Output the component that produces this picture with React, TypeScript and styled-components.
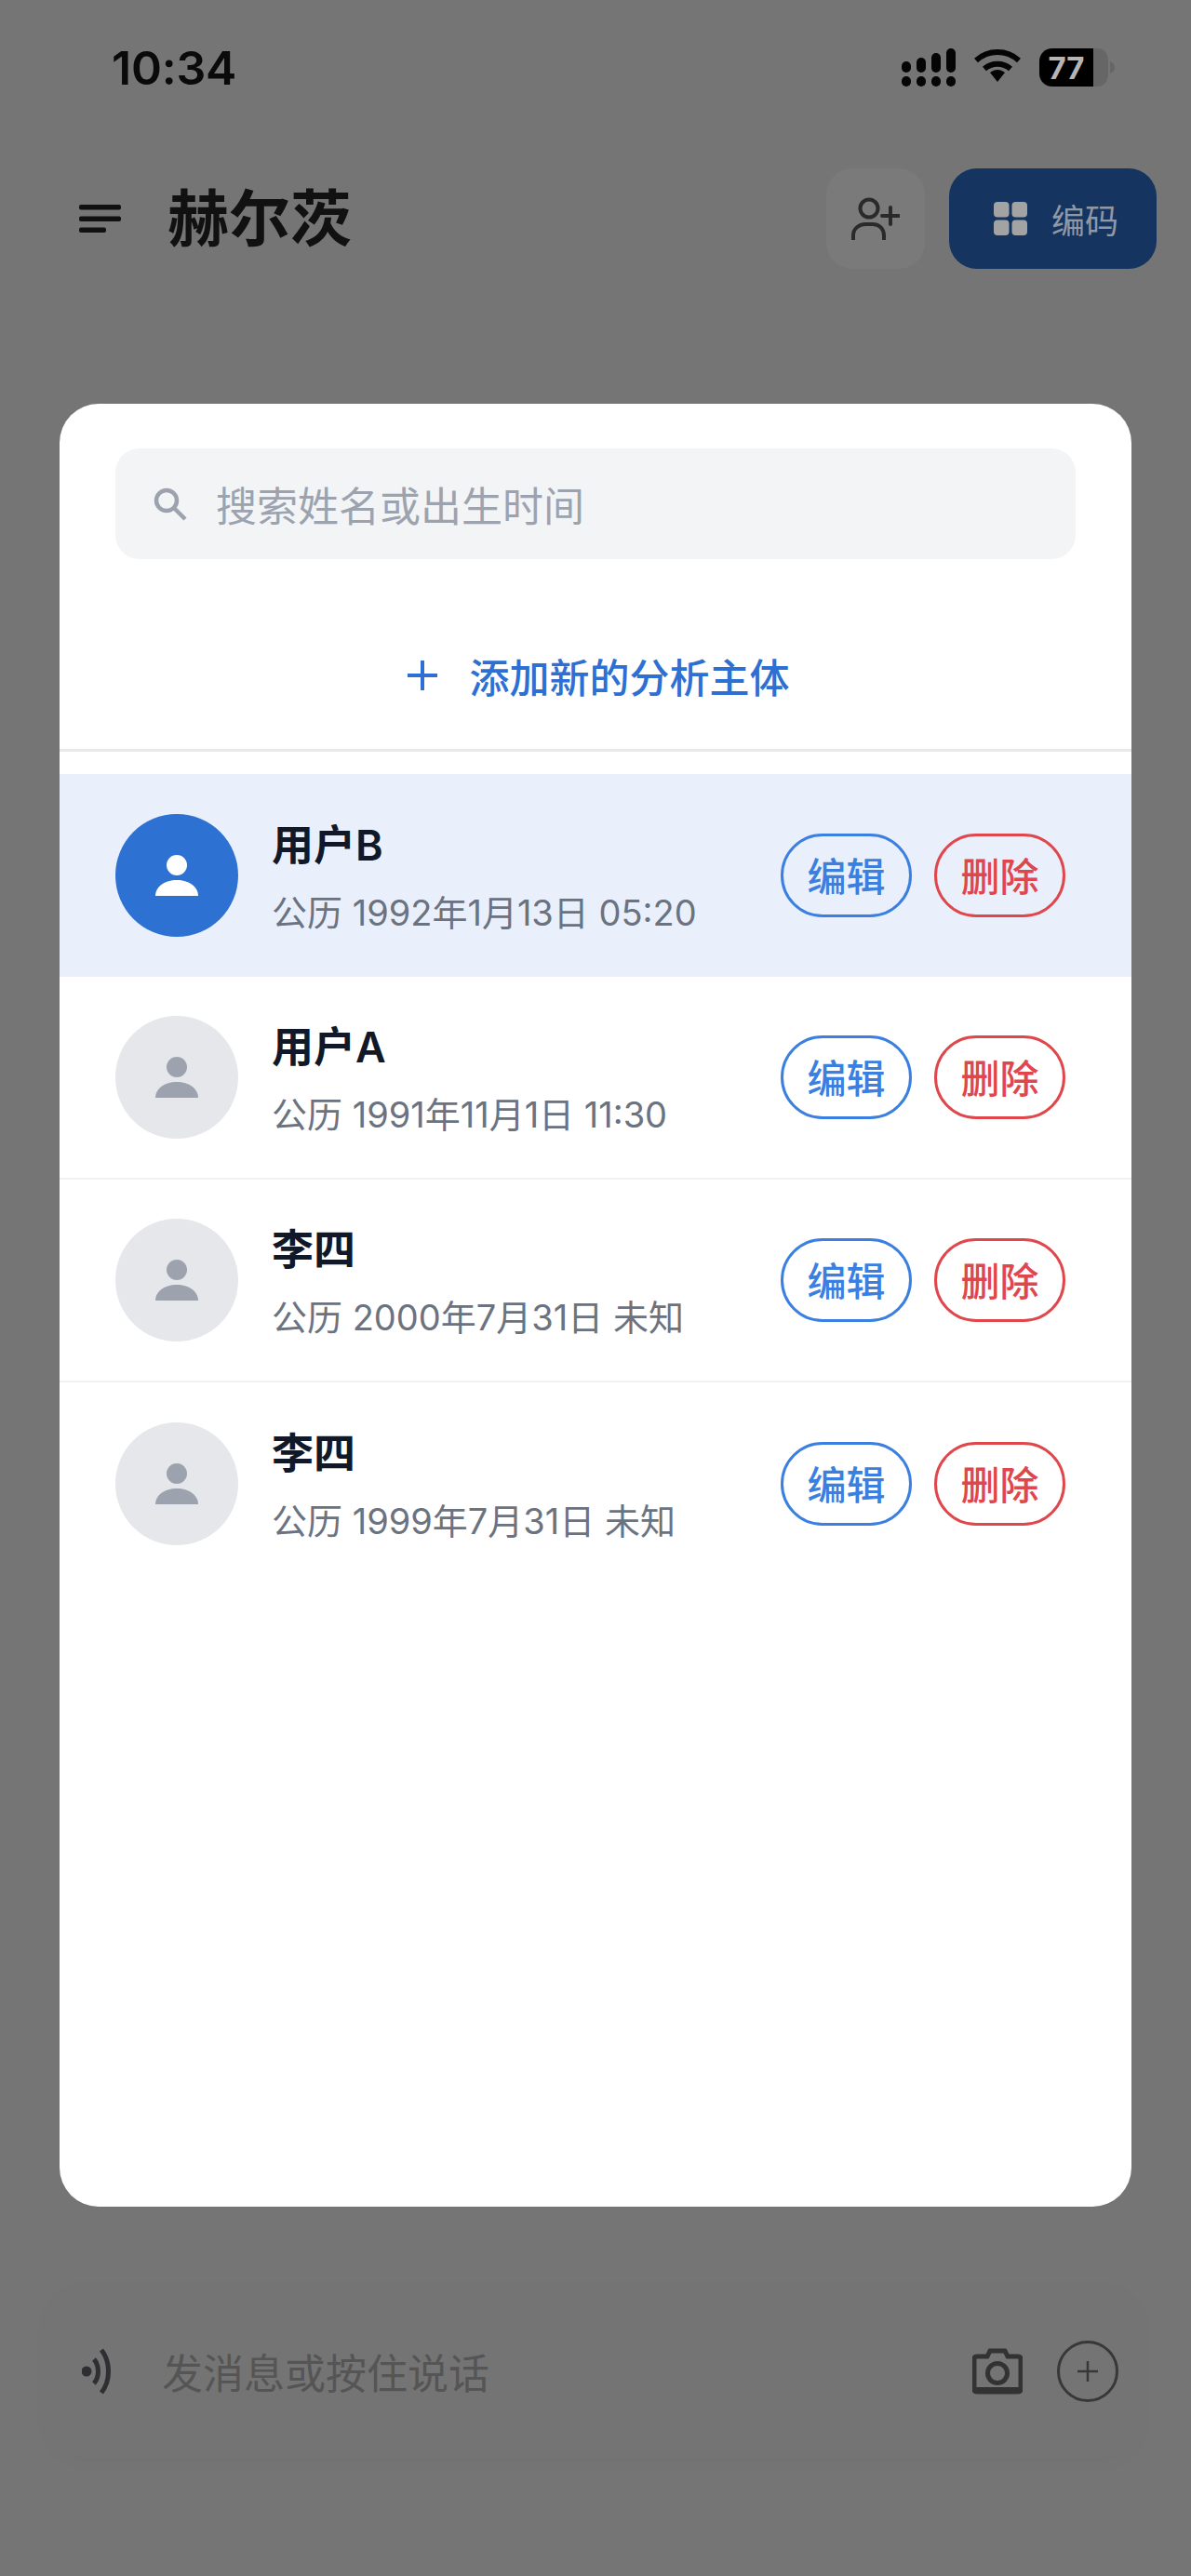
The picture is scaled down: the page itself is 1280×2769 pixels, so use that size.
import React from "react";
import styled, { createGlobalStyle } from "styled-components";

const GlobalStyle = createGlobalStyle`
  html, body {
    margin: 0;
    padding: 0;
    background: #757575;
    font-family: Inter, "Noto Sans CJK SC", sans-serif;
  }
`;

const Page = styled.div`
  width: 1280px;
  height: 2769px;
  overflow: hidden;
  display: flex;
  flex-direction: column;
  background: #757575;
`;

const StatusBar = styled.div`
  height: 180px;
  box-sizing: border-box;
  padding: 46px 82px 0 120px;
  display: flex;
  justify-content: space-between;
  align-items: flex-start;
`;

const Time = styled.div`
  font-size: 50px;
  line-height: 54px;
  font-weight: 600;
  letter-spacing: -0.2px;
  color: #0a0a0a;
`;

const StatusIcons = styled.div`
  display: flex;
  align-items: flex-start;
  gap: 20px;
  padding-top: 6px;
`;

const Header = styled.div`
  height: 110px;
  display: flex;
  align-items: center;
  padding: 0 37px 0 85px;
`;

const Title = styled.h1`
  margin: 0 0 0 50px;
  flex: 1;
  font-size: 66px;
  line-height: 80px;
  font-weight: 700;
  color: #111;
`;

const AddPersonButton = styled.div`
  width: 106px;
  height: 108px;
  margin-right: 26px;
  border-radius: 28px;
  background: #7a7a7a;
  display: flex;
  align-items: center;
  justify-content: center;
`;

const CodeButton = styled.div`
  width: 223px;
  height: 108px;
  box-sizing: border-box;
  padding-left: 48px;
  border-radius: 30px;
  background: #15345f;
  display: flex;
  align-items: center;
  gap: 26px;
  font-size: 36px;
  color: #8f98a5;
`;

const Modal = styled.div`
  width: 1152px;
  height: 1938px;
  margin: 144px 0 0 64px;
  border-radius: 42px;
  background: #fff;
  overflow: hidden;
`;

const SearchBox = styled.div`
  height: 119px;
  margin: 48px 60px 0;
  padding-left: 41px;
  border-radius: 26px;
  background: #f3f4f6;
  display: flex;
  align-items: center;
  gap: 31px;
  font-size: 44px;
  color: #9ca3af;
`;

const AddRow = styled.div`
  height: 158px;
  padding: 46px 0 0 6px;
  display: flex;
  align-items: center;
  justify-content: center;
  gap: 35px;
  font-size: 43px;
  font-weight: 500;
  color: #2d6fd2;
  border-bottom: 3px solid #e8e9ec;
`;

const List = styled.div`
  padding-top: 24px;
`;

const Row = styled.div<{ $active?: boolean; $last?: boolean }>`
  height: 218px;
  box-sizing: border-box;
  padding: 0 71px 0 60px;
  display: flex;
  align-items: center;
  background: ${(props) => (props.$active ? "#e9f0fb" : "#fff")};
  border-bottom: ${(props) => (props.$active || props.$last ? "none" : "2px solid #f1f2f4")};
`;

const Avatar = styled.div<{ $active?: boolean }>`
  width: 132px;
  height: 132px;
  flex: none;
  border-radius: 50%;
  background: ${(props) => (props.$active ? "#2d71d3" : "#e5e7eb")};
  color: ${(props) => (props.$active ? "#fff" : "#9ca3af")};
  display: flex;
  align-items: center;
  justify-content: center;
`;

const Info = styled.div`
  flex: 1;
  margin-left: 36px;
  display: flex;
  flex-direction: column;
  gap: 24px;
  padding-top: 6px;
`;

const Name = styled.div`
  font-size: 45px;
  line-height: 50px;
  font-weight: 600;
  color: #111827;
`;

const Detail = styled.div`
  font-size: 38px;
  line-height: 46px;
  color: #6b7280;
`;

const PillButton = styled.div<{ $color: string }>`
  width: 141px;
  height: 90px;
  box-sizing: border-box;
  margin-left: 24px;
  padding-bottom: 4px;
  border-radius: 45px;
  border: 3px solid ${(props) => props.$color};
  color: ${(props) => props.$color};
  background: transparent;
  display: flex;
  align-items: center;
  justify-content: center;
  font-size: 42px;
  font-weight: 500;
`;

const Composer = styled.div`
  width: 1179px;
  height: 187px;
  box-sizing: border-box;
  margin: 83px 0 0 49px;
  padding: 0 26px 0 39px;
  border-radius: 42px;
  background: #747474;
  box-shadow: 0 6px 20px rgba(0, 0, 0, 0.02);
  display: flex;
  align-items: center;
`;

const ComposerText = styled.div`
  flex: 1;
  margin-left: 52px;
  font-size: 44px;
  color: #555;
`;

const PlusCircle = styled.div`
  width: 66px;
  height: 66px;
  box-sizing: border-box;
  margin-left: 37px;
  border-radius: 50%;
  border: 3px solid #383838;
  display: flex;
  align-items: center;
  justify-content: center;
`;

const SignalIcon = () => (
  <svg width="58" height="41" viewBox="0 0 58 41" fill="#050505">
    <rect x="0" y="14" width="10" height="12" rx="5" />
    <rect x="16" y="10" width="10" height="16" rx="5" />
    <rect x="32" y="5" width="10" height="21" rx="5" />
    <rect x="48" y="0" width="10" height="26" rx="5" />
    <rect x="0" y="30" width="10" height="11" rx="5" />
    <rect x="16" y="30" width="10" height="11" rx="5" />
    <rect x="32" y="30" width="10" height="11" rx="5" />
    <rect x="48" y="30" width="10" height="11" rx="5" />
  </svg>
);

const WifiIcon = () => (
  <svg width="50" height="36" viewBox="0 0 50 36" fill="none" stroke="#050505" strokeWidth="6">
    <path d="M2 13C15 1 35 1 48 13" />
    <path d="M11 22C19 15 31 15 39 22" />
    <path d="M17 26L25 36L33 26C28 22 22 22 17 26Z" fill="#050505" stroke="none" />
  </svg>
);

const BatteryIcon = () => (
  <svg width="81" height="41" viewBox="0 0 81 41">
    <path d="M58 0H62C70 0 74 6 74 14V27C74 35 70 41 62 41H58Z" fill="#666" />
    <path d="M14 0H58V41H14C6 41 0 35 0 27V14C0 6 6 0 14 0Z" fill="#000" />
    <path d="M76 14C79 15 81 18 81 20.500C81 23 79 26 76 27Z" fill="#666" />
    <text x="29" y="33" textAnchor="middle" fontSize="33" fontWeight="700" fontFamily="Inter, sans-serif" fill="#b5b5b5">
      77
    </text>
  </svg>
);

const MenuIcon = () => (
  <svg width="45" height="30" viewBox="0 0 45 30" fill="#111">
    <rect x="0" y="0" width="45" height="5.500" rx="2" />
    <rect x="0" y="12.500" width="45" height="5.500" rx="2" />
    <rect x="0" y="24.500" width="29" height="5.500" rx="2" />
  </svg>
);

const AddPersonIcon = () => (
  <svg width="52" height="46" viewBox="0 0 52 46" fill="none" stroke="#2a2a2a" strokeWidth="4" strokeLinecap="round">
    <circle cx="19" cy="12" r="9.500" />
    <path d="M2 45V41C2 34 8 29 15 29H23C30 29 35 34 35 41V45" />
    <path d="M42 11V29M33 20H51" />
  </svg>
);

const GridIcon = () => (
  <svg width="36" height="36" viewBox="0 0 36 36" fill="#a3a3a3">
    <rect x="0" y="0" width="16.500" height="16.500" rx="4" />
    <rect x="19.500" y="0" width="16.500" height="16.500" rx="4" />
    <rect x="0" y="19.500" width="16.500" height="16.500" rx="4" />
    <rect x="19.500" y="19.500" width="16.500" height="16.500" rx="4" />
  </svg>
);

const SearchIcon = () => (
  <svg width="36" height="36" viewBox="0 0 36 36" fill="none" stroke="#9ca3af" strokeWidth="4.500">
    <circle cx="14" cy="14" r="11" />
    <path d="M22 22L34 34" />
  </svg>
);

const PlusIcon = () => (
  <svg width="32" height="32" viewBox="0 0 32 32" stroke="#2d6fd2" strokeWidth="4">
    <path d="M16 0V32M0 16H32" />
  </svg>
);

const PersonIcon = () => (
  <svg width="46" height="44" viewBox="0 0 46 44" fill="currentColor">
    <circle cx="23" cy="11" r="11" />
    <path d="M0 44C0 34 10 27 23 27C36 27 46 34 46 44Z" />
  </svg>
);

const VoiceIcon = () => (
  <svg width="34" height="50" viewBox="0 0 34 50" fill="none" stroke="#2f2f33" strokeWidth="5">
    <circle cx="5" cy="25" r="5.500" fill="#2f2f33" stroke="none" />
    <path d="M13 12C19 19 19 31 13 38" />
    <path d="M21 2C31 15 31 35 21 48" />
  </svg>
);

const CameraIcon = () => (
  <svg width="54" height="50" viewBox="0 0 54 50" fill="none" stroke="#333" strokeWidth="5">
    <path d="M5 9H16L19 3H35L38 9H49C51 9 52 10 52 12V44C52 46 51 47 49 47H5C3 47 2 46 2 44V12C2 10 3 9 5 9Z" />
    <circle cx="27" cy="27" r="10.500" />
    <path d="M2 45H52" strokeWidth="6" />
  </svg>
);

const SmallPlus = () => (
  <svg width="22" height="22" viewBox="0 0 22 22" stroke="#383838" strokeWidth="2.500">
    <path d="M11 0V22M0 11H22" />
  </svg>
);

const people = [
  { name: "用户B", detail: "公历 1992年1月13日 05:20", active: true },
  { name: "用户A", detail: "公历 1991年11月1日 11:30" },
  { name: "李四", detail: "公历 2000年7月31日 未知" },
  { name: "李四", detail: "公历 1999年7月31日 未知" },
];

const App: React.FC = () => {
  return (
    <Page>
      <GlobalStyle />
      <StatusBar>
        <Time>10:34</Time>
        <StatusIcons>
          <SignalIcon />
          <WifiIcon />
          <BatteryIcon />
        </StatusIcons>
      </StatusBar>

      <Header>
        <MenuIcon />
        <Title>赫尔茨</Title>
        <AddPersonButton>
          <AddPersonIcon />
        </AddPersonButton>
        <CodeButton>
          <GridIcon />
          编码
        </CodeButton>
      </Header>

      <Modal>
        <SearchBox>
          <SearchIcon />
          搜索姓名或出生时间
        </SearchBox>
        <AddRow>
          <PlusIcon />
          添加新的分析主体
        </AddRow>
        <List>
          {people.map((person, index) => (
            <Row key={index} $active={person.active} $last={index === people.length - 1}>
              <Avatar $active={person.active}>
                <PersonIcon />
              </Avatar>
              <Info>
                <Name>{person.name}</Name>
                <Detail>{person.detail}</Detail>
              </Info>
              <PillButton $color="#3b7fe0">编辑</PillButton>
              <PillButton $color="#e0474c">删除</PillButton>
            </Row>
          ))}
        </List>
      </Modal>

      <Composer>
        <VoiceIcon />
        <ComposerText>发消息或按住说话</ComposerText>
        <CameraIcon />
        <PlusCircle>
          <SmallPlus />
        </PlusCircle>
      </Composer>
    </Page>
  );
};

export default App;
